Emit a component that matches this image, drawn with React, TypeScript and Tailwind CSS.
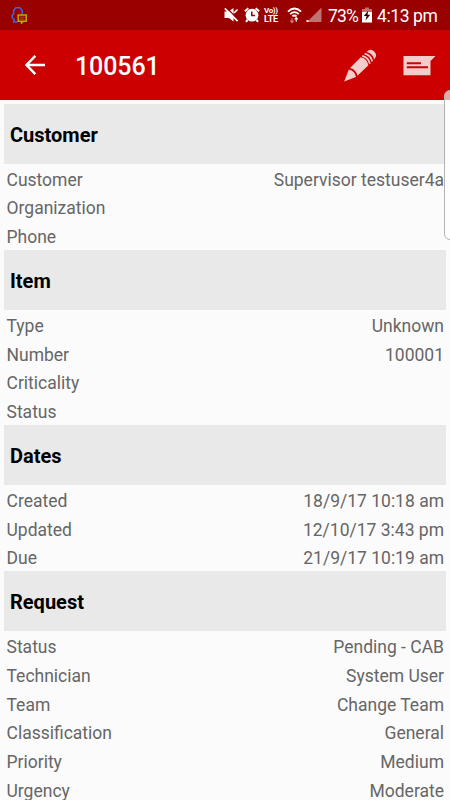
import React from "react";

interface Field {
  label: string;
  value?: string;
}

interface Section {
  title: string;
  fields: Field[];
}

const sections: Section[] = [
  {
    title: "Customer",
    fields: [
      { label: "Customer", value: "Supervisor testuser4a" },
      { label: "Organization" },
      { label: "Phone" },
    ],
  },
  {
    title: "Item",
    fields: [
      { label: "Type", value: "Unknown" },
      { label: "Number", value: "100001" },
      { label: "Criticality" },
      { label: "Status" },
    ],
  },
  {
    title: "Dates",
    fields: [
      { label: "Created", value: "18/9/17 10:18 am" },
      { label: "Updated", value: "12/10/17 3:43 pm" },
      { label: "Due", value: "21/9/17 10:19 am" },
    ],
  },
  {
    title: "Request",
    fields: [
      { label: "Status", value: "Pending - CAB" },
      { label: "Technician", value: "System User" },
      { label: "Team", value: "Change Team" },
      { label: "Classification", value: "General" },
      { label: "Priority", value: "Medium" },
      { label: "Urgency", value: "Moderate" },
    ],
  },
];

const NotificationIcon = () => (
  <svg width="16" height="18" viewBox="0 0 16 18" fill="none" className="shrink-0">
    <path
      d="M6.5 16H2.5L3.2 13.5L1.2 11.7V9.5L2.7 7.5V4.5L4.7 1.7H9L11.3 4.5V8.5"
      stroke="#3868e0"
      strokeWidth="1.5"
    />
    <path d="M7.2 9H15.2V15.2H12L10.5 17V15.2H7.2Z" stroke="#acb400" strokeWidth="1.5" />
    <path d="M9 11.2H13.5M9 13.2H13.5" stroke="#a35a08" />
  </svg>
);

const MuteIcon = () => (
  <svg width="15" height="16" viewBox="0 0 15 16" className="shrink-0">
    <path d="M.5 4.5H4.5L9.5 1V14.5L5 11H.5Z" fill="#fff" />
    <path d="M2.2 .5L14.5 12.8" stroke="#990000" strokeWidth="1.4" />
    <path d="M.8 1.3L13.6 14.1M13.5 2.5L10 6" stroke="#fff" strokeWidth="1.7" />
  </svg>
);

const AlarmIcon = () => (
  <svg width="16" height="16" viewBox="0 0 16 16" className="shrink-0">
    <path d="M.9 4.3L4.3 1.2M15.1 4.3L11.7 1.2M3.5 12.8L2 14.8M12.5 12.8L14 14.8" stroke="#fff" strokeWidth="2" />
    <circle cx="8" cy="8.2" r="6.4" fill="#fff" />
    <path d="M7.8 4.6V8.5H11" stroke="#990000" strokeWidth="1.5" fill="none" />
  </svg>
);

const WifiIcon = () => (
  <svg width="15" height="17" viewBox="0 0 15 17" fill="none" className="shrink-0">
    <path d="M.9 4.6Q7.5-1.7 14.1 4.6M3.2 7.1Q7.5 3.1 11.8 7.1M5.4 9.4Q7.5 7.5 9.6 9.4" stroke="#fff" strokeWidth="1.8" />
    <path d="M9.2 10.5V14.8M7.6 12.4L9.2 10.6L10.8 12.4" stroke="#fff" strokeWidth="1.1" />
    <path d="M5 11V15.5M3.4 13.6L5 15.6L6.6 13.6" stroke="#cc8080" strokeWidth="1.1" />
  </svg>
);

const SignalIcon = () => (
  <svg width="16" height="16" viewBox="0 0 16 16" className="shrink-0">
    <path d="M15.5 .5V15H1Z" fill="#c27070" />
    <path d="M.5 13H2.5V15H.5Z" fill="#fff" />
  </svg>
);

const BatteryIcon = () => (
  <svg width="10" height="16" viewBox="0 0 10 16" className="shrink-0">
    <path d="M3 .5H7V2H10V5H0V2H3Z" fill="#c27070" />
    <path d="M0 5H10V15.5H0Z" fill="#fff" />
    <path d="M6.2 3.8L1.8 9H4.6L3.5 13.4L8.2 7.8H5.5Z" fill="#220000" />
  </svg>
);

const BackIcon = () => (
  <svg width="20" height="20" viewBox="0 0 20 20" fill="none" className="shrink-0">
    <path d="M10.3 .8L1.5 10L10.3 19.2M1.5 10H20" stroke="#fff" strokeWidth="2.4" />
  </svg>
);

const PencilIcon = () => (
  <svg width="33" height="33" viewBox="0 0 33 33" fill="#f5cccc" className="shrink-0">
    <path d="M.2 32.5L4.8 20.6Q10.8 22 12 28Z" />
    <path d="M6 19.1L16.8 8.2Q23.2 9.7 24.4 16.2L13.4 26.8Q12.2 20.6 6 19.1Z" />
    <path
      d="M18.2 6.8Q24.6 8.4 25.9 14.7M20.6 4.6Q27 6.2 28.2 12.4"
      fill="none"
      stroke="#f5cccc"
      strokeWidth="1.8"
    />
    <path d="M22.6 2.9Q26.5-1 30.2 2.5Q34 6.2 30.2 10.5Q28.7 4.3 22.6 2.9Z" />
  </svg>
);

const NoteIcon = () => (
  <svg width="33" height="21" viewBox="0 0 33 21" className="shrink-0">
    <path d="M.5 1H32.5L27.5 6V20.3H.5Z" fill="#f5cccc" />
    <path d="M3.8 8.2H18M3.8 12.2H25" stroke="#cc0000" strokeWidth="2" />
  </svg>
);

const App: React.FC = () => {
  return (
    <div className="relative h-[800px] w-[450px] overflow-hidden bg-[#fbfbfb] font-[Roboto,sans-serif]">
      {/* Status bar */}
      <div className="flex h-[30px] items-center bg-[#990000] pr-[13px] pl-[11px] text-white">
        <NotificationIcon />
        <div className="ml-auto flex items-center">
          <MuteIcon />
          <div className="ml-[5px]">
            <AlarmIcon />
          </div>
          <div className="ml-[4px] flex w-[16px] flex-col font-bold whitespace-nowrap">
            <span className="h-[8px] text-[8px] leading-[8px] tracking-[-0.4px]">Vo))</span>
            <span className="h-[9px] text-[9px] leading-[9px] tracking-[-0.2px]">LTE</span>
          </div>
          <div className="ml-[7px]">
            <WifiIcon />
          </div>
          <div className="ml-[4px]">
            <SignalIcon />
          </div>
          <span className="mt-[2px] ml-[6px] w-[30px] text-[17.5px] tracking-[-0.8px] whitespace-nowrap">73%</span>
          <div className="ml-[4px]">
            <BatteryIcon />
          </div>
          <span className="mt-[2px] ml-[5px] w-[60px] text-[17.5px] tracking-[-0.4px] whitespace-nowrap">4:13 pm</span>
        </div>
      </div>

      {/* App bar */}
      <div className="flex h-[70px] items-center bg-[#cc0000] pr-[14px] pl-[25px]">
        <BackIcon />
        <h1 className="ml-[30px] pt-[3px] text-[25px] font-medium tracking-[-0.1px] text-white">100561</h1>
        <div className="ml-auto flex items-center gap-[26px]">
          <PencilIcon />
          <NoteIcon />
        </div>
      </div>

      {/* Request details */}
      <div className="pt-[4px] pr-[4px] pl-[4px]">
        {sections.map((section) => (
          <section key={section.title}>
            <h2 className="flex h-[60px] items-center bg-[#e9e9e9] pt-[2px] pl-[6px] text-[20px] font-bold text-black">
              {section.title}
            </h2>
            {section.fields.map((field) => (
              <div
                key={field.label}
                className="flex h-[28.74px] items-center justify-between pt-[3px] pr-[2px] pl-[2.5px] text-[17.5px] text-[#666666]"
              >
                <span>{field.label}</span>
                <span>{field.value}</span>
              </div>
            ))}
          </section>
        ))}
      </div>

      {/* Edge panel handle */}
      <div className="absolute top-[90px] -right-[8px] h-[150px] w-[14px] rounded-[6px] border border-[#b5b5b5] bg-white/65" />
    </div>
  );
};

export default App;
